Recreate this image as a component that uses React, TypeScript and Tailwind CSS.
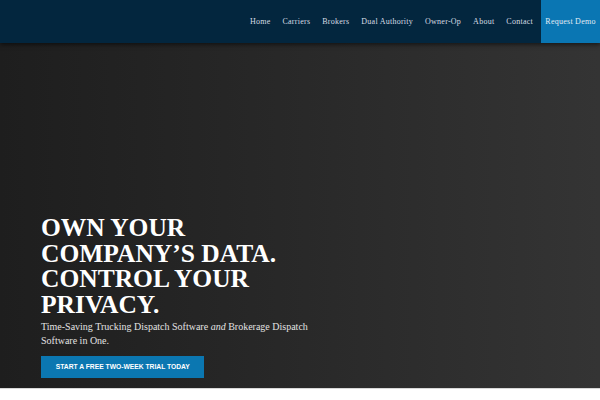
import React from "react";

const nav = ["Home", "Carriers", "Brokers", "Dual Authority", "Owner-Op", "About", "Contact"];

export default function App() {
  return (
    <div className="flex h-[400px] w-[600px] flex-col overflow-hidden bg-white">
      <header className="relative z-10 flex h-[43px] shrink-0 items-stretch justify-end bg-[#03263e] shadow-[0_2px_4px_rgba(0,0,0,0.5)]">
        <nav className="flex items-center gap-[12px] pr-[8px] font-['Liberation_Serif',serif] text-[8px] text-[#d6dde3]">
          {nav.map((n) => (
            <a key={n} href="#" className="tracking-[0.25px]">
              {n}
            </a>
          ))}
        </nav>
        <a
          href="#"
          className="flex w-[59px] items-center justify-center bg-[#0a76b3] font-['Liberation_Serif',serif] text-[8px] tracking-[0.25px] text-[#e3edf5]"
        >
          Request Demo
        </a>
      </header>
      <section className="flex h-[345px] shrink-0 flex-col justify-end bg-gradient-to-r from-[#1e1e1e] to-[#343434] px-[41px] pb-[10px]">
        <h1 className="font-['Liberation_Serif',serif] text-[25.5px] font-bold uppercase leading-[25.5px] text-white">
          Own Your
          <br />
          Company’s Data.
          <br />
          Control Your
          <br />
          Privacy.
        </h1>
        <p className="mt-[3px] font-['Liberation_Serif',serif] text-[10px] leading-[14px] text-[#e2e2e2]">
          Time-Saving Trucking Dispatch Software <em>and</em> Brokerage Dispatch
          <br />
          Software in One.
        </p>
        <a
          href="#"
          className="mt-[8px] flex h-[22px] w-[163px] items-center justify-center bg-[#0b77b1] font-['Liberation_Sans',sans-serif] text-[8px] font-bold uppercase text-white"
        >
          <span className="inline-block scale-x-[0.84] whitespace-nowrap">Start a free two-week trial today</span>
        </a>
      </section>
      <div className="h-px bg-[#d8d8d8]" />
    </div>
  );
}
